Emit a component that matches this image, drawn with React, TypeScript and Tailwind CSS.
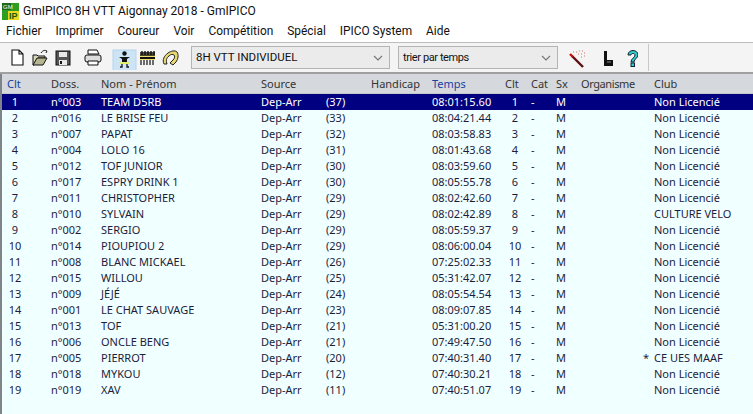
const rows: [string, string, string, string, string, string, string][] = [
  ["1", "n°003", "TEAM D5RB", "(37)", "08:01:15.60", "", "Non Licencié"],
  ["2", "n°016", "LE BRISE FEU", "(33)", "08:04:21.44", "", "Non Licencié"],
  ["3", "n°007", "PAPAT", "(32)", "08:03:58.83", "", "Non Licencié"],
  ["4", "n°004", "LOLO 16", "(31)", "08:01:43.68", "", "Non Licencié"],
  ["5", "n°012", "TOF JUNIOR", "(30)", "08:03:59.60", "", "Non Licencié"],
  ["6", "n°017", "ESPRY DRINK 1", "(30)", "08:05:55.78", "", "Non Licencié"],
  ["7", "n°011", "CHRISTOPHER", "(29)", "08:02:42.60", "", "Non Licencié"],
  ["8", "n°010", "SYLVAIN", "(29)", "08:02:42.89", "", "CULTURE VELO"],
  ["9", "n°002", "SERGIO", "(29)", "08:05:59.37", "", "Non Licencié"],
  ["10", "n°014", "PIOUPIOU 2", "(29)", "08:06:00.04", "", "Non Licencié"],
  ["11", "n°008", "BLANC MICKAEL", "(26)", "07:25:02.33", "", "Non Licencié"],
  ["12", "n°015", "WILLOU", "(25)", "05:31:42.07", "", "Non Licencié"],
  ["13", "n°009", "JÉJÉ", "(24)", "08:05:54.54", "", "Non Licencié"],
  ["14", "n°001", "LE CHAT SAUVAGE", "(23)", "08:09:07.85", "", "Non Licencié"],
  ["15", "n°013", "TOF", "(21)", "05:31:00.20", "", "Non Licencié"],
  ["16", "n°006", "ONCLE BENG", "(21)", "07:49:47.50", "", "Non Licencié"],
  ["17", "n°005", "PIERROT", "(20)", "07:40:31.40", "*", "CE UES MAAF"],
  ["18", "n°018", "MYKOU", "(12)", "07:40:30.21", "", "Non Licencié"],
  ["19", "n°019", "XAV", "(11)", "07:40:51.07", "", "Non Licencié"],
];

const menus = ["Fichier", "Imprimer", "Coureur", "Voir", "Compétition", "Spécial", "IPICO System", "Aide"];

function Chevron() {
  return (
    <svg width="10" height="6" viewBox="0 0 10 6" className="shrink-0">
      <path d="M1 1l4 4 4-4" fill="none" stroke="#777" strokeWidth="1.2" />
    </svg>
  );
}

function Select({ label, className }: { label: string; className: string }) {
  return (
    <div className={`${className} h-[23px] flex items-center justify-between border border-[#b4b4b4] bg-[#ebebeb] pl-[4px] pr-[6px] font-['Roboto',sans-serif]`}>
      <span>{label}</span>
      <Chevron />
    </div>
  );
}

export default function App() {
  return (
    <div className="w-[753px] h-[414px] overflow-hidden bg-white text-[12px] leading-none text-[#111] font-['Noto_Sans',sans-serif] flex flex-col">
      <div className="h-[22px] flex items-center pl-[2px] gap-[4px] text-[12px] shrink-0 font-['Roboto',sans-serif]">
        <svg width="17" height="17" viewBox="0 0 17 17">
          <rect width="17" height="17" fill="#2e9e22" />
          <rect x="0" y="0" width="9" height="7" fill="#1c6b18" />
          <text x="1" y="6" fontSize="6" fill="#fff" fontFamily="Liberation Sans">GM</text>
          <rect x="6" y="8" width="11" height="9" fill="#e8d820" />
          <text x="7" y="16" fontSize="9" fontWeight="bold" fill="#1c5a10" fontFamily="Liberation Sans">IP</text>
        </svg>
        <span>GmIPICO 8H VTT Aigonnay 2018 - GmIPICO</span>
      </div>
      <div className="h-[21px] flex items-center pl-[6px] gap-[14px] text-[11.9px] shrink-0 border-b border-[#bdbdbd] font-['Roboto',sans-serif]">
        {menus.map((m) => (
          <span key={m}>{m}</span>
        ))}
      </div>
      <div className="h-[31px] flex items-center bg-[#f4f4f4] border-b-2 border-[#a0a0a0] shrink-0">
        <div className="w-[191px] h-full flex items-center shrink-0">
          <svg width="190" height="24" viewBox="0 0 190 24">
            <path d="M12 4h7l4 4v11H12z M19 4v4h4" fill="#fff" stroke="#111" strokeWidth="1.1" />
            <path d="M33 9h4l1 1h7v2h-7l-4 7h-1z" fill="#d9d9b8" stroke="#111" />
            <path d="M33 19l4-7h10l-4 7z" fill="#b5b58f" stroke="#111" />
            <path d="M41 7c2-3 4-3 6-2l-1 2" fill="none" stroke="#111" />
            <rect x="56" y="5" width="14" height="14" fill="#555" stroke="#111" />
            <rect x="59" y="6" width="8" height="5" fill="#e8e8e8" />
            <rect x="59" y="14" width="8" height="5" fill="#e8e8e8" />
            <rect x="60" y="15" width="2" height="3" fill="#111" />
            <path d="M88 4h9l2 4H88z" fill="#fff" stroke="#111" />
            <rect x="85" y="9" width="16" height="7" rx="2" fill="#ddd" stroke="#111" />
            <path d="M88 15h10v4H88z" fill="#fff" stroke="#111" />
            <rect x="113" y="4" width="23" height="21" fill="#cde4f7" stroke="#b4d4ee" />
            <circle cx="124.5" cy="7.5" r="2.2" fill="#111" />
            <path d="M119 11h11l-3 2v3h-5v-3z" fill="#111" />
            <path d="M120 16h9v2h-9z" fill="#dff06a" />
            <path d="M122 18v3h-2M127 18v3h2" fill="none" stroke="#111" strokeWidth="1.3" />
            <path d="M140 8h15v6h-15z" fill="#f0e070" />
            <path d="M140 7h15M140 9h15M142 5v4M145 5v4M148 5v4M151 5v4M154 5v4" stroke="#111" strokeWidth="1.4" fill="none" />
            <path d="M140 12h15" stroke="#111" strokeWidth="2" />
            <path d="M141 14v5M144 14v5M147 14v5M150 14v5M153 14v5" stroke="#111" strokeWidth="1.2" />
            <path d="M164 18c-2-4 0-8 4-11 3-2 7-3 9-1 2 3 1 7-1 10l-3 3-3-2 3-3c2-2 2-4 1-5-1-1-3-1-5 1-3 2-3 5-2 8z" fill="#e8d870" stroke="#222" strokeWidth="1" />
          </svg>
        </div>
        <Select label="8H VTT INDIVIDUEL" className="w-[199px] text-[11.5px]" />
        <div className="w-[8px]" />
        <Select label="trier par temps" className="w-[160px] text-[11px] tracking-[-0.4px]" />
        <svg width="80" height="24" viewBox="0 0 80 24" className="shrink-0">
          <path d="M14 10l11 11" stroke="#5a1010" strokeWidth="2.4" />
          <path d="M12 8l3 3" stroke="#c01010" strokeWidth="2.4" />
          <path d="M18 6h1M21 5h1M24 5h1M20 8h1M23 8h1M26 7h1M23 11h1M26 10h1M15 6h1" stroke="#d07070" strokeWidth="1.2" />
          <path d="M46 5h3v9h6v6h-9z" fill="#111" />
          <path d="M49 16h4" stroke="#888" />
          <path d="M70 9c0-6 10-6 10 0 0 3-4 4-4 7h-3c0-4 4-4 4-7 0-2-4-2-4 0z" fill="#3cc" stroke="#123" strokeWidth="1" />
          <rect x="73" y="17" width="3.5" height="3.5" fill="#3cc" stroke="#123" />
        </svg>
        <div className="w-px h-[27px] bg-[#c8c8c8] ml-[10px]" />
      </div>
      <div className="flex-1 flex flex-col bg-[#f0ffff] border-l-[2px] border-[#7f8488] text-[11px] text-[#1c1c3c]">
        <div className="h-[20px] flex items-center bg-[#d5d9dd] shrink-0 text-[#333] border-b border-[#c4c8cc] pb-[1px]">
          <span className="w-[49px] pl-[5px] text-[#1a3fa0]">Clt</span>
          <span className="w-[50px]">Doss.</span>
          <span className="w-[160px]">Nom - Prénom</span>
          <span className="w-[110px]">Source</span>
          <span className="w-[61px]">Handicap</span>
          <span className="w-[73px] text-[#1a3fa0]">Temps</span>
          <span className="w-[26px]">Clt</span>
          <span className="w-[25px]">Cat</span>
          <span className="w-[25px]">Sx</span>
          <span className="w-[73px] tracking-[-0.4px]">Organisme</span>
          <span>Club</span>
        </div>
        {rows.map((r, i) => (
          <div key={r[1]} className={`h-[16px] flex items-center shrink-0 pb-[2px] ${i === 0 ? "bg-[#000080] text-white" : ""}`}>
            <span className="w-[49px] pl-[3px]"><span className="block w-[20px] text-center">{r[0]}</span></span>
            <span className="w-[50px]">{r[1]}</span>
            <span className="w-[160px]">{r[2]}</span>
            <span className="w-[65px]">Dep-Arr</span>
            <span className="w-[106px]">{r[3]}</span>
            <span className="w-[73px]">{r[4]}</span>
            <span className="w-[26px]"><span className="block w-[20px] text-center">{r[0]}</span></span>
            <span className="w-[25px]">-</span>
            <span className="w-[25px]">M</span>
            <span className="w-[73px] text-right pr-[5px]">{r[5]}</span>
            <span>{r[6]}</span>
          </div>
        ))}
      </div>
    </div>
  );
}
